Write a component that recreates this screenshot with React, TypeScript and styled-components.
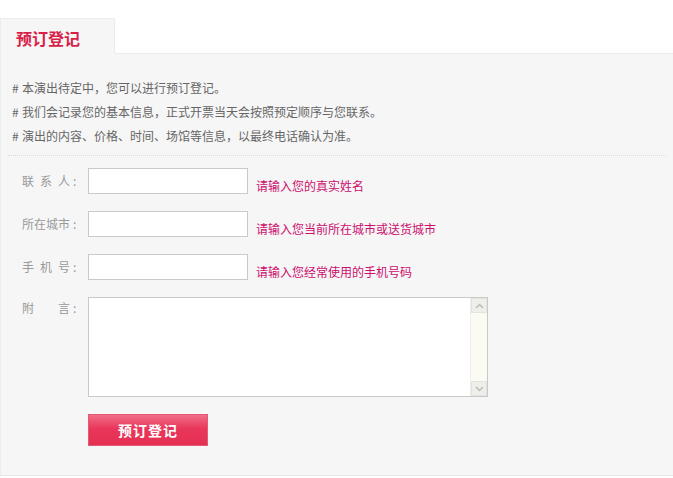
import { createGlobalStyle } from "styled-components";
import styled from "styled-components";

const GlobalStyle = createGlobalStyle`
  html, body {
    margin: 0;
    padding: 0;
    background: #fff;
  }
  body {
    font-family: "Noto Sans CJK SC", "Liberation Sans", sans-serif;
    font-size: 12px;
    color: #666;
  }
`;

const notes = [
  "本演出待定中，您可以进行预订登记。",
  "我们会记录您的基本信息，正式开票当天会按照预定顺序与您联系。",
  "演出的内容、价格、时间、场馆等信息，以最终电话确认为准。",
];

const fields = [
  { label: "联系人", hint: "请输入您的真实姓名" },
  { label: "所在城市", hint: "请输入您当前所在城市或送货城市" },
  { label: "手机号", hint: "请输入您经常使用的手机号码" },
];

const Chevron = ({ up }: { up?: boolean }) => (
  <svg width="9" height="6" viewBox="0 0 9 6">
    <path
      d={up ? "M1 5 L4.5 1.5 L8 5" : "M1 1 L4.5 4.5 L8 1"}
      fill="none"
      stroke="#b9bdb5"
      strokeWidth="1.5"
    />
  </svg>
);

const App = () => {
  return (
    <Page>
      <GlobalStyle />
      <Header>
        <Tab>预订登记</Tab>
        <HeaderRest />
      </Header>
      <Body>
        <Notes>
          {notes.map((n) => (
            <Note key={n}>
              <Hash>#</Hash>
              {n}
            </Note>
          ))}
        </Notes>
        <Divider />
        <Form>
          {fields.map((f) => (
            <Row key={f.label}>
              <Label>
                <LabelText>{f.label}</LabelText>
                <Colon>:</Colon>
              </Label>
              <Input type="text" />
              <Hint>{f.hint}</Hint>
            </Row>
          ))}
          <AreaRow>
            <Label>
              <LabelText>附言</LabelText>
              <Colon>:</Colon>
            </Label>
            <AreaBox>
              <Area />
              <ScrollBar>
                <ScrollButton>
                  <Chevron up />
                </ScrollButton>
                <ScrollTrack />
                <ScrollButton>
                  <Chevron />
                </ScrollButton>
              </ScrollBar>
            </AreaBox>
          </AreaRow>
          <ButtonRow>
            <Submit type="button">预订登记</Submit>
          </ButtonRow>
        </Form>
      </Body>
    </Page>
  );
};

export default App;

const Page = styled.div`
  padding-top: 18px;
  width: 673px;
`;

const Header = styled.div`
  display: flex;
  height: 36px;
`;

const Tab = styled.div`
  width: 115px;
  height: 36px;
  box-sizing: border-box;
  border-top: 1px solid #ececec;
  border-left: 1px solid #ececec;
  border-right: 1px solid #ececec;
  background: #f6f6f6;
  color: #d81f48;
  font-size: 16px;
  font-weight: bold;
  padding-left: 15px;
  line-height: 38px;
`;

const HeaderRest = styled.div`
  flex: 1;
  border-bottom: 1px solid #ececec;
`;

const Body = styled.div`
  background: #f6f6f6;
  border-left: 1px solid #ececec;
  border-bottom: 1px solid #e6e6e6;
  padding: 22px 0 29px 0;
`;

const Notes = styled.div`
  padding-left: 11px;
`;

const Note = styled.div`
  line-height: 24px;
  color: #666;
  font-size: 12px;
`;

const Hash = styled.span`
  display: inline-block;
  width: 10px;
`;

const Divider = styled.div`
  margin: 7px 7px 0 7px;
  border-top: 1px dotted #dcdcdc;
`;

const Form = styled.div`
  padding-top: 12px;
`;

const Row = styled.div`
  display: flex;
  align-items: center;
  height: 26px;
  margin-bottom: 17px;
`;

const AreaRow = styled.div`
  display: flex;
  align-items: flex-start;
  margin-bottom: 17px;
`;

const Label = styled.div`
  width: 66px;
  margin-left: 21px;
  display: flex;
  align-items: center;
  color: #999;
  font-size: 12px;
  line-height: 22px;
`;

const LabelText = styled.span`
  width: 48px;
  text-align: justify;
  text-align-last: justify;
`;

const Colon = styled.span`
  margin-left: 3px;
`;

const Input = styled.input`
  width: 160px;
  height: 26px;
  box-sizing: border-box;
  border: 1px solid #c9c9c9;
  background: #fff;
  outline: none;
  margin: 0;
  padding: 0 4px;
`;

const Hint = styled.span`
  margin-left: 8px;
  margin-top: 10px;
  line-height: 14px;
  color: #cc0e6e;
  font-size: 12px;
`;

const AreaBox = styled.div`
  display: flex;
  width: 400px;
  height: 100px;
  box-sizing: border-box;
  border: 1px solid #c9c9c9;
  background: #fff;
`;

const Area = styled.textarea`
  flex: 1;
  border: none;
  outline: none;
  resize: none;
  margin: 0;
  padding: 2px;
  background: #fff;
  font-family: inherit;
`;

const ScrollBar = styled.div`
  width: 16px;
  display: flex;
  flex-direction: column;
  background: #fbfbf4;
  border-left: 1px solid #eeeeea;
`;

const ScrollButton = styled.div`
  height: 15px;
  display: flex;
  align-items: center;
  justify-content: center;
  background: #eeeeea;
  border: 1px solid #e4e4de;
  box-sizing: border-box;
`;

const ScrollTrack = styled.div`
  flex: 1;
`;

const ButtonRow = styled.div`
  padding-left: 87px;
`;

const Submit = styled.button`
  display: block;
  width: 120px;
  height: 32px;
  border: 1px solid #e35a78;
  background: linear-gradient(#f26c86 0%, #e8375a 45%, #e52f52 100%);
  color: #fff;
  font-family: inherit;
  font-size: 14px;
  font-weight: bold;
  letter-spacing: 1px;
  padding: 0;
  cursor: pointer;
`;
